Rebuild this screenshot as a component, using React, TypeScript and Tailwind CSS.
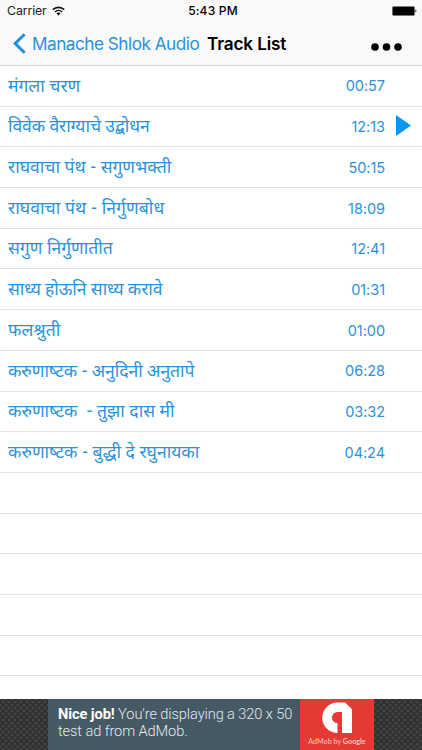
const tracks = [
  { title: 'मंगला चरण', time: '00:57' },
  { title: 'विवेक वैराग्याचे उद्बोधन', time: '12:13', playing: true, spacing: 'tracking-[-0.14px]' },
  { title: 'राघवाचा पंथ - सगुणभक्ती', time: '50:15' },
  { title: 'राघवाचा पंथ - निर्गुणबोध', time: '18:09', spacing: 'tracking-[0.11px]' },
  { title: 'सगुण निर्गुणातीत', time: '12:41' },
  { title: 'साध्य होऊनि साध्य करावे', time: '01:31', spacing: 'tracking-[-0.15px]' },
  { title: 'फलश्रुती', time: '01:00' },
  { title: 'करुणाष्‍टक - अनुदिनी अनुतापे', time: '06:28', spacing: 'tracking-[-0.08px]' },
  { title: 'करुणाष्‍टक  - तुझा दास मी', time: '03:32' },
  { title: 'करुणाष्‍टक - बुद्धी दे रघुनायका', time: '04:24' },
];

const emptyRows = [0, 1, 2, 3, 4];

function StatusBar() {
  return (
    <div className="grid h-[22px] grid-cols-3 items-center pl-[7px] pr-[5px] text-[12px] leading-none">
      <div className="flex items-center gap-[5px]">
        <span className="text-[12.3px] tracking-[-0.1px] text-[#222]">Carrier</span>
        <svg className="h-[10px] w-[13px]" viewBox="0 0 13 10" fill="none" stroke="#111" strokeWidth="1.6">
          <path d="M0.8 3.7a8.2 8.2 0 0 1 11.4 0" />
          <path d="M2.9 6a5.2 5.2 0 0 1 7.2 0" />
          <path d="M6.5 9.6 4.5 7.5a3 3 0 0 1 4 0z" fill="#111" stroke="none" />
        </svg>
      </div>
      <span className="pl-[2px] text-center font-medium tracking-[0.2px]">5:43 PM</span>
      <svg className="h-[10px] w-[25px] justify-self-end" viewBox="0 0 25 10">
        <rect x="0.4" y="0.4" width="22.2" height="9.2" rx="1.4" fill="#000" stroke="#777" strokeWidth="0.6" />
        <path d="M23.4 3.4c1.4.3 1.4 2.9 0 3.2z" fill="#222" />
      </svg>
    </div>
  );
}

function NavBar() {
  return (
    <div className="flex h-[43px] items-center pl-[13px] pr-[20px]">
      <svg className="h-[21px] w-[13px]" viewBox="0 0 13 21" fill="none" stroke="#1b8fe0" strokeWidth="3">
        <path d="M11.6 1.2 2.2 10.5l9.4 9.3" />
      </svg>
      <span className="ml-[6px] w-[175px] whitespace-nowrap text-[17.2px] tracking-[-0.5px] text-[#2a92dc]">
        Manache Shlok Audio
      </span>
      <h1 className="whitespace-nowrap text-[17.2px] font-semibold tracking-[-0.15px]">Track List</h1>
      <svg className="ml-auto mt-[7px] h-[8px] w-[31px]" viewBox="0 0 31 8">
        <circle cx="4" cy="4" r="3.8" />
        <circle cx="15.5" cy="4" r="3.8" />
        <circle cx="27" cy="4" r="3.8" />
      </svg>
    </div>
  );
}

function AdBanner() {
  return (
    <div className="flex h-[51px] justify-center bg-[#303030] bg-[radial-gradient(circle,#444_1.2px,transparent_1.8px),radial-gradient(circle,#444_1.2px,transparent_1.8px)] bg-[length:6px_6px] bg-[position:0_0,3px_3px]">
      <div className="flex w-[326px]">
        <div className="w-[252px] whitespace-nowrap bg-[#465a65] pl-[10px] pt-[7px] font-[Roboto] text-[14.6px] font-light leading-[17px] tracking-[-0.09px] text-[#e4e9eb]">
          <b className="font-bold text-white">Nice job!</b> You're displaying a 320 x 50
          <br />
          test ad from AdMob.
        </div>
        <div className="flex w-[74px] flex-col items-center bg-[#e53935] pt-[3px]">
          <svg className="h-[32px] w-[32px]" viewBox="0 0 32 32">
            <path d="M16.500 31A15.250 15.250 0 0 1 16.500 0.500H24L31 7V31H21V10H16.500A5.500 5.500 0 0 0 16.500 21Z" fill="#fff" />
          </svg>
          <span className="mt-[3px] whitespace-nowrap font-[Lato] text-[7.2px] leading-[9px] text-[#f9c5c3]">
            AdMob by <span className="font-bold">Google</span>
          </span>
        </div>
      </div>
    </div>
  );
}

export default function App() {
  return (
    <div className="flex h-[750px] w-[422px] flex-col overflow-hidden bg-white font-[Inter,sans-serif] text-black">
      <header className="h-[66px] shrink-0 border-b border-[#d4d4d6] bg-[#f9f9f9]">
        <StatusBar />
        <NavBar />
      </header>

      <main className="h-[633px] shrink-0 overflow-hidden">
        {tracks.map((track) => (
          <div key={track.title} className="flex h-[40.700px] items-center border-b border-[#e4e4e6] pl-[8px] text-[#2a92dc]">
            <span
              className={`whitespace-pre pt-[4px] font-['Noto_Sans_Devanagari','Noto_Sans',sans-serif] text-[17.5px] ${track.spacing ?? ''}`}
            >
              {track.title}
            </span>
            <span className="ml-auto pt-px text-[14.5px] tracking-[-0.05px]">{track.time}</span>
            <span className="w-[37px] pb-[3px] pl-[11px]">
              {track.playing && (
                <svg className="h-[21px] w-[15px]" viewBox="0 0 15 21">
                  <path d="M0 0v21l15-10.500z" fill="#0a95ee" />
                </svg>
              )}
            </span>
          </div>
        ))}
        {emptyRows.map((row) => (
          <div key={row} className="h-[40.700px] border-b border-[#e4e4e6]" />
        ))}
      </main>

      <AdBanner />
    </div>
  );
}
